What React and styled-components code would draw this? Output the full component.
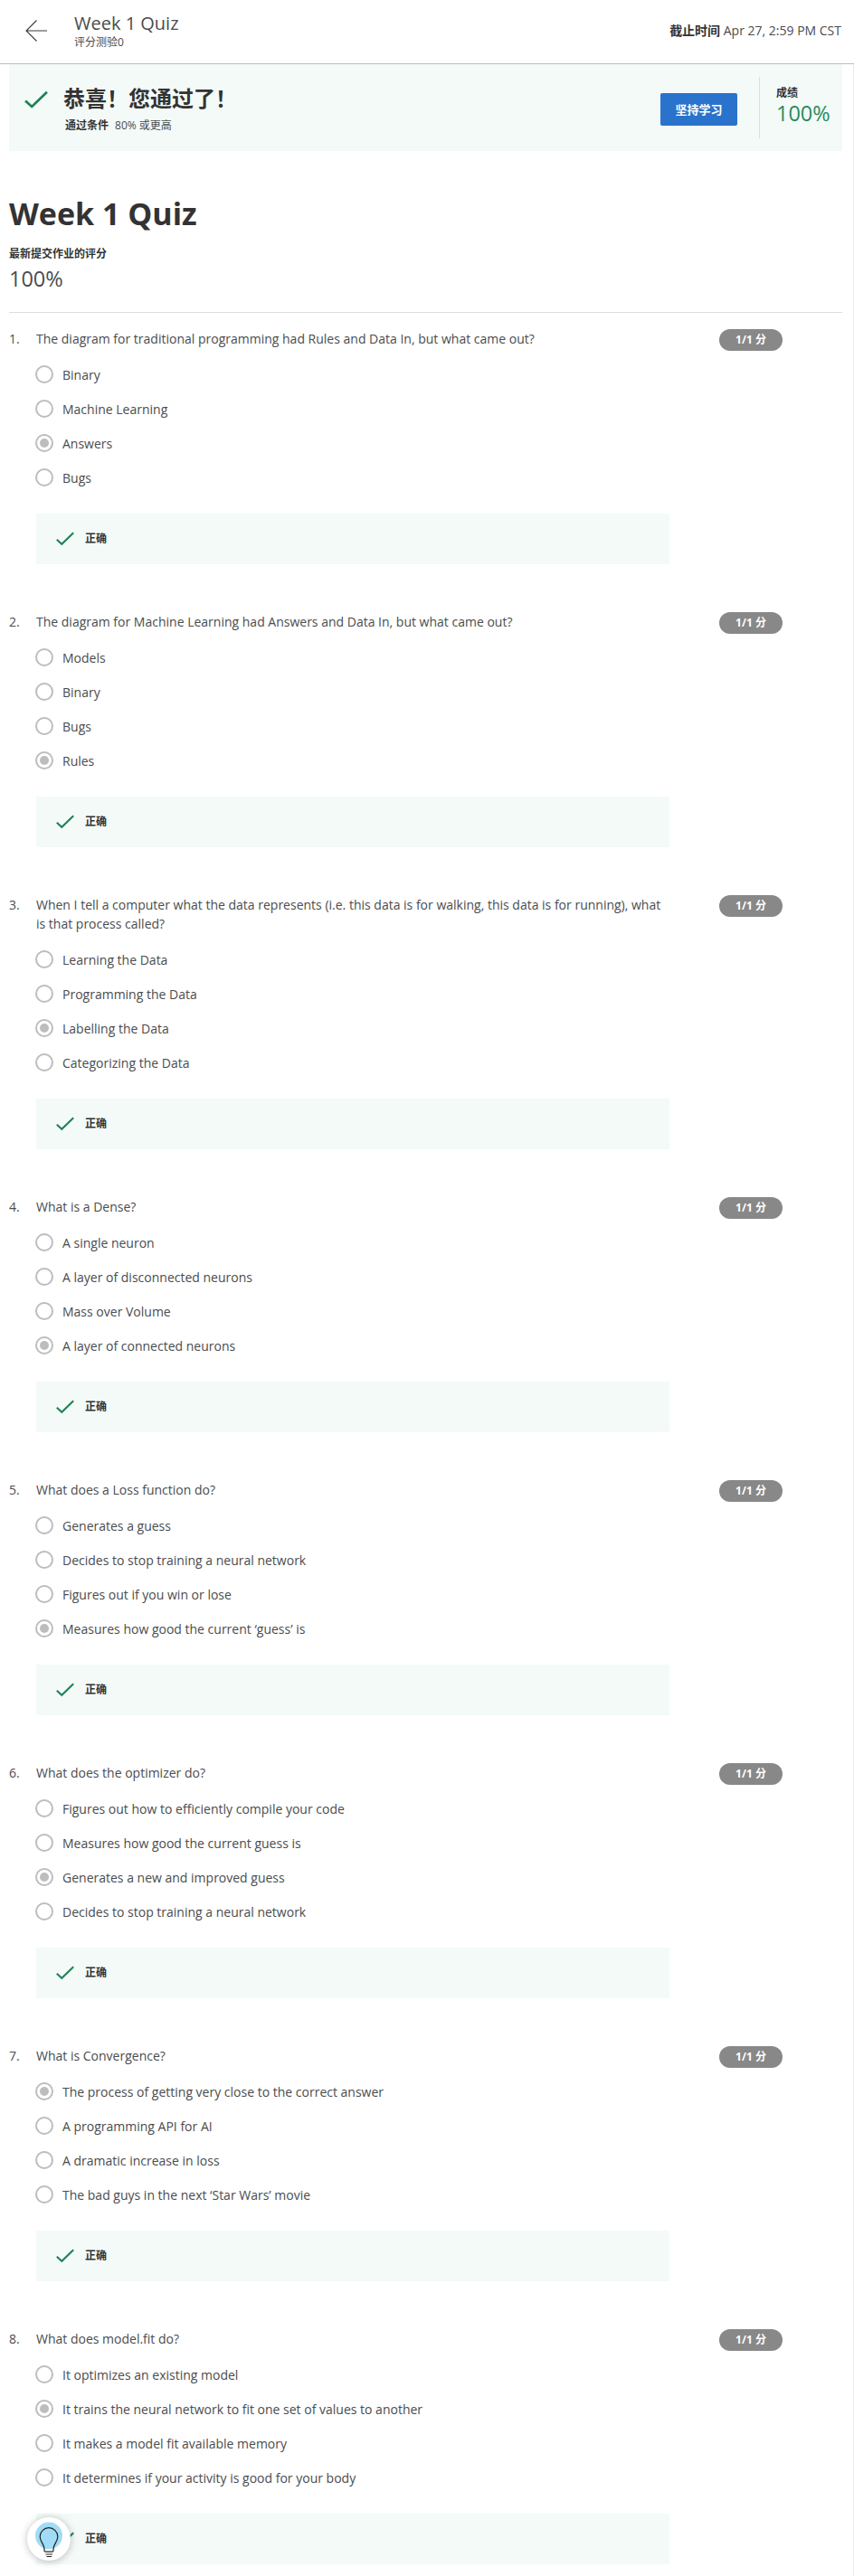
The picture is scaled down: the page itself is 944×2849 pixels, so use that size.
import React from "react";
import styled, { createGlobalStyle } from "styled-components";

const GlobalStyle = createGlobalStyle`
  * { box-sizing: border-box; }
  body {
    margin: 0;
    background: #fff;
    color: #4a4c4e;
    font-family: "Open Sans", "Noto Sans CJK SC", sans-serif;
    font-size: 14px;
    line-height: 21px;
  }
  b { color: #333; }
`;

const Page = styled.div`
  position: relative;
  width: 944px;
  height: 2849px;
  overflow: hidden;
  display: flex;
  flex-direction: column;
`;

const Header = styled.header`
  display: flex;
  align-items: center;
  height: 71px;
  flex: none;
  padding: 0 14px 0 28px;
  border-bottom: 1px solid #bdbdbd;
`;

const BackIcon = styled.svg`
  width: 24px;
  height: 24px;
  margin-top: -2px;
`;

const HeaderTitle = styled.div`
  flex: 1;
  margin: 0 0 0 30px;
`;

const QuizName = styled.div`
  font-size: 20px;
  line-height: 24px;
`;

const QuizKind = styled.div`
  font-size: 12px;
  line-height: 18px;
`;

const Deadline = styled.div`
  font-size: 14px;
  margin-top: -3px;
`;

const Content = styled.main`
  flex: 1;
  padding: 0 12px 0 10px;
  border-right: 1px solid #ececec;
  border-bottom: 2px solid #efefef;
`;

const Banner = styled.section`
  display: flex;
  height: 96px;
  padding: 14px 13px 0 17px;
  background: #f3faf8;
`;

const BannerCheck = styled.div`
  width: 28px;
  padding-top: 15px;
`;

const BannerText = styled.div`
  flex: 1;
  padding: 7px 0 0 15px;
`;

const BannerHeading = styled.h2`
  margin: 0;
  font-size: 24px;
  line-height: 34px;
  font-weight: 700;
  color: #333;
`;

const PassRule = styled.div`
  display: flex;
  gap: 7px;
  padding: 4px 0 0 2px;
  font-size: 12px;
  line-height: 18px;
`;

const KeepLearning = styled.button`
  width: 85px;
  height: 36px;
  margin: 18px 24px 0 0;
  border: 0;
  border-radius: 2px;
  padding: 0;
  background: #2a73cc;
  color: #fff;
  font: 700 13px/36px "Open Sans", "Noto Sans CJK SC", sans-serif;
`;

const Grade = styled.div`
  height: 68px;
  width: 79px;
  padding: 9px 0 0 18px;
  border-left: 1px solid #ddd;
`;

const SmallLabel = styled.div`
  font-size: 12px;
  line-height: 18px;
  font-weight: 700;
  color: #333;
`;

const Score = styled.div`
  font-size: 23.5px;
  line-height: 26px;
  color: ${(p) => (p.$passed ? "#2a8a5e" : "#4a4c4e")};
`;

const Summary = styled.section`
  height: 179px;
  padding-top: 49px;
  border-bottom: 1px solid #ddd;

  ${Score} {
    margin-top: 5px;
  }
`;

const PageTitle = styled.h1`
  margin: 0 0 16px;
  font-size: 34px;
  line-height: 40px;
  font-weight: 700;
  color: #333;
`;

const QuestionList = styled.div`
  padding-top: 18px;
`;

const Question = styled.section`
  display: flex;
  align-items: flex-start;
  margin-bottom: 53px;
`;

const Index = styled.div`
  width: 30px;
`;

const Body = styled.div`
  width: 700px;
`;

const Options = styled.div`
  padding-top: 10px;
  margin-bottom: 21px;
`;

const Option = styled.label`
  display: flex;
  align-items: center;
  height: 38px;
  gap: 10px;
  margin-left: -1px;
`;

const Radio = styled.span`
  width: 20px;
  height: 20px;
  flex: none;
  border: 2px solid #bdbdbd;
  border-radius: 50%;
  padding: 3px;

  &::before {
    content: "";
    display: block;
    width: 10px;
    height: 10px;
    border-radius: 50%;
    background: ${(p) => (p.$checked ? "#bdbdbd" : "transparent")};
  }
`;

const Feedback = styled.div`
  display: flex;
  align-items: center;
  gap: 12px;
  height: 56px;
  padding-left: 22px;
  background: #f3faf8;
`;

const Points = styled.div`
  width: 70px;
  height: 24px;
  margin: 0 0 0 55px;
  border-radius: 12px;
  background: #888;
  color: #fff;
  font-size: 12px;
  line-height: 24px;
  font-weight: 700;
  text-align: center;
`;

const HelpButton = styled.div`
  position: absolute;
  left: 30px;
  bottom: 17px;
  width: 48px;
  height: 48px;
  border-radius: 50%;
  background: #fff;
  box-shadow: 0 1px 8px rgba(0, 0, 0, 0.25);
`;

const Check = ({ size }) => (
  <svg width={size} height={size * 0.8} viewBox="0 0 20 16" fill="none" stroke="#1f8354" strokeWidth="2.1">
    <path d="M.8 8.800 6.300 13.800 19.200 1.300" />
  </svg>
);

const Bulb = () => (
  <svg width="48" height="48" viewBox="0 0 48 48" fill="none" stroke="#222" strokeWidth="1.2">
    <circle cx="24" cy="20.500" r="15" fill="#a0dcf5" stroke="none" />
    <path d="M19.500 35.500h9.500V37q0 1-1 1h-7.500q-1 0-1-1z" fill="#fff" stroke="none" />
    <path d="M19 35v2q0 1.200 1.200 1.200h7.600q1.200 0 1.200-1.200v-2c0-5 4.800-8 4.800-13.500a9.800 9.800 0 0 0-19.600 0C14.200 27 19 30 19 35" />
    <path d="M20.500 41h7.500M21.500 43.500h5.500" />
  </svg>
);

const questions = [
  ["The diagram for traditional programming had Rules and Data In, but what came out?", ["Binary", "Machine Learning", "Answers", "Bugs"], 2],
  ["The diagram for Machine Learning had Answers and Data In, but what came out?", ["Models", "Binary", "Bugs", "Rules"], 3],
  ["When I tell a computer what the data represents (i.e. this data is for walking, this data is for running), what is that process called?", ["Learning the Data", "Programming the Data", "Labelling the Data", "Categorizing the Data"], 2],
  ["What is a Dense?", ["A single neuron", "A layer of disconnected neurons", "Mass over Volume", "A layer of connected neurons"], 3],
  ["What does a Loss function do?", ["Generates a guess", "Decides to stop training a neural network", "Figures out if you win or lose", "Measures how good the current ‘guess’ is"], 3],
  ["What does the optimizer do?", ["Figures out how to efficiently compile your code", "Measures how good the current guess is", "Generates a new and improved guess", "Decides to stop training a neural network"], 2],
  ["What is Convergence?", ["The process of getting very close to the correct answer", "A programming API for AI", "A dramatic increase in loss", "The bad guys in the next ‘Star Wars’ movie"], 0],
  ["What does model.fit do?", ["It optimizes an existing model", "It trains the neural network to fit one set of values to another", "It makes a model fit available memory", "It determines if your activity is good for your body"], 1],
];

export default function App() {
  return (
    <Page>
      <GlobalStyle />
      <Header>
        <BackIcon viewBox="0 0 24 24" fill="none" stroke="#373a3c" strokeWidth="1.1">
          <path d="M12.500.5 1 12l11.500 11.500M1 12h23" />
        </BackIcon>
        <HeaderTitle>
          <QuizName>Week 1 Quiz</QuizName>
          <QuizKind>评分测验0</QuizKind>
        </HeaderTitle>
        <Deadline><b>截止时间</b> Apr 27, 2:59 PM CST</Deadline>
      </Header>
      <Content>
        <Banner>
          <BannerCheck><Check size={26} /></BannerCheck>
          <BannerText>
            <BannerHeading>恭喜！您通过了！</BannerHeading>
            <PassRule><b>通过条件</b><span>80% 或更高</span></PassRule>
          </BannerText>
          <KeepLearning>坚持学习</KeepLearning>
          <Grade>
            <SmallLabel>成绩</SmallLabel>
            <Score $passed>100%</Score>
          </Grade>
        </Banner>
        <Summary>
          <PageTitle>Week 1 Quiz</PageTitle>
          <SmallLabel>最新提交作业的评分</SmallLabel>
          <Score>100%</Score>
        </Summary>
        <QuestionList>
          {questions.map(([text, options, chosen], i) => (
            <Question key={text}>
              <Index>{i + 1}.</Index>
              <Body>
                {text}
                <Options>
                  {options.map((option, n) => (
                    <Option key={option}>
                      <Radio $checked={n === chosen} />
                      {option}
                    </Option>
                  ))}
                </Options>
                <Feedback>
                  <Check size={20} />
                  <SmallLabel>正确</SmallLabel>
                </Feedback>
              </Body>
              <Points>1/1 分</Points>
            </Question>
          ))}
        </QuestionList>
      </Content>
      <HelpButton><Bulb /></HelpButton>
    </Page>
  );
}
